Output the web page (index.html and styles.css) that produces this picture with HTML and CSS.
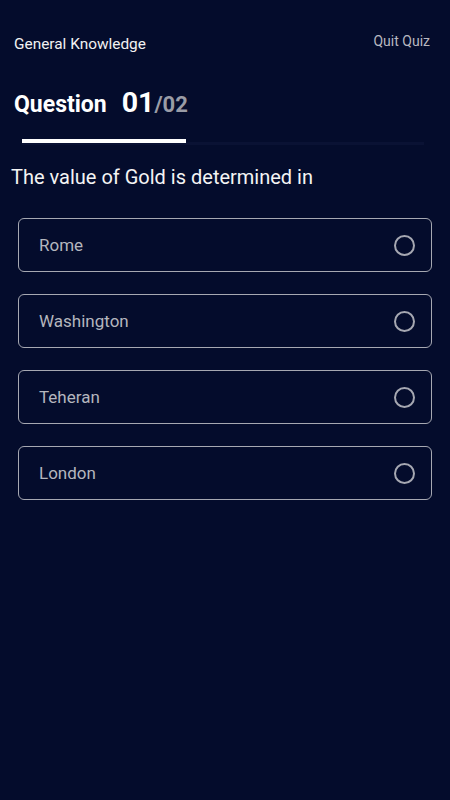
FILE: index.html
```html
<!DOCTYPE html>
<html lang="en">
<head>
  <meta charset="UTF-8" />
  <title>Quiz</title>
  <link rel="stylesheet" href="styles.css">
</head>
<body>

<header class="topbar">
  <span class="category">General Knowledge</span>
  <span class="quit">Quit Quiz</span>
</header>

<div class="counter">
  <span class="label">Question</span>
  <span class="num">01</span><span class="total">/02</span>
</div>

<div class="progress">
  <div class="progress-fill"></div>
</div>

<p class="question">The value of Gold is determined in</p>

<div class="options">
  <div class="option"><span>Rome</span><span class="radio"></span></div>
  <div class="option"><span>Washington</span><span class="radio"></span></div>
  <div class="option"><span>Teheran</span><span class="radio"></span></div>
  <div class="option"><span>London</span><span class="radio"></span></div>
</div>

</body>
</html>
```

FILE: styles.css
```css
body {
  font-family: Roboto, 'Noto Sans', sans-serif;
  background-color: #040c2c;
  color: #ffffff;
  margin: 0;
  padding: 0;
  height: 800px;
}

.topbar {
  display: flex;
  justify-content: space-between;
  align-items: flex-start;
  padding: 32px 20px 0 14px;
}

.category {
  font-size: 15.4px;
  margin-top: 3px;
  color: #f2f2f2;
}

.quit {
  font-size: 14px;
  margin-top: 1px;
  color: #b8b8c0;
}

.counter {
  display: flex;
  align-items: baseline;
  padding: 0 14px;
  margin-top: 33px;
  height: 36px;
}

.label {
  font-size: 23px;
  font-weight: 700;
  margin-right: 15px;
}

.num {
  font-size: 28.5px;
  font-weight: 700;
}

.total {
  font-size: 22px;
  font-weight: 700;
  color: #9a9ca6;
}

.progress {
  margin: 17px 26px 0 22px;
  height: 6px;
  position: relative;
}

.progress::before {
  content: "";
  position: absolute;
  left: 0;
  right: 0;
  top: 3px;
  height: 3px;
  background: #0a1234;
}

.progress-fill {
  position: relative;
  width: 164px;
  height: 4px;
  background: #ffffff;
}

.question {
  font-size: 20px;
  margin: 20px 0 0 11px;
  color: #f4f4f4;
}

.options {
  display: flex;
  flex-direction: column;
  gap: 22px;
  padding: 0 18px;
  margin-top: 29px;
}

.option {
  height: 52px;
  border: 1px solid #a6a8b2;
  border-radius: 6px;
  display: flex;
  align-items: center;
  justify-content: space-between;
  padding: 0 16px 0 20px;
  font-size: 17px;
  color: #b4b6be;
}

.radio {
  width: 17px;
  height: 17px;
  border: 2px solid #a6a8b2;
  border-radius: 50%;
}
```
